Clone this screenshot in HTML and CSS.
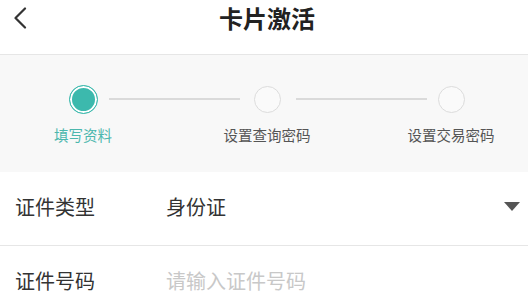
FILE: index.html
```html
<!DOCTYPE html>
<html lang="zh-CN">
<head>
  <meta charset="UTF-8"/>
  <meta name="viewport" content="width=device-width, initial-scale=1.0"/>
  <title>卡片激活</title>
  <link rel="stylesheet" href="styles.css">
</head>
<body>
  <div class="header">
    <a class="back" href="#">
      <svg width="14" height="22" viewBox="0 0 14 22"><polyline points="12,1.5 2.5,11 12,20.5" fill="none" stroke="#333" stroke-width="2.2" stroke-linecap="round" stroke-linejoin="round"/></svg>
    </a>
    <h1>卡片激活</h1>
  </div>

  <!-- steps -->
  <div class="steps">
    <div class="step active">
      <div class="dot-wrap"><span class="dot"></span></div>
      <span class="step-label">填写资料</span>
    </div>
    <div class="line"></div>
    <div class="step">
      <div class="dot-wrap"><span class="dot"></span></div>
      <span class="step-label">设置查询密码</span>
    </div>
    <div class="line"></div>
    <div class="step">
      <div class="dot-wrap"><span class="dot"></span></div>
      <span class="step-label">设置交易密码</span>
    </div>
  </div>

  <form class="form">
    <div class="row">
      <label>证件类型</label>
      <span class="value">身份证</span>
      <span class="caret"></span>
    </div>
    <div class="row">
      <label>证件号码</label>
      <input type="text" placeholder="请输入证件号码">
    </div>
  </form>
</body>
</html>
```

FILE: styles.css
```css
body { margin:0; background:#fff; font-family:"Noto Sans CJK SC", "Noto Sans", sans-serif; color:#333; overflow:hidden; }
.header {
  position: relative;
  height: 54px;
  border-bottom: 1px solid #e6e6e6;
  display: flex;
  align-items: center;
  justify-content: center;
}
.header h1 { margin:0; font-size:24px; font-weight:bold; color:#222; line-height:1; margin-top:-18px; margin-left:6px; }
.back { position:absolute; left:13px; top:7px; display:block; width:14px; height:22px; }
.back svg { display:block; }

.steps {
  background: #f8f8f8;
  display: flex;
  align-items: flex-start;
  padding: 29px 61px 27px 67px;
}
.step { width:32px; display:flex; flex-direction:column; align-items:center; }
.dot-wrap { height:31px; display:flex; align-items:center; justify-content:center; }
.dot {
  display: block;
  width: 25px;
  height: 25px;
  border: 1px solid #dcdcdc;
  border-radius: 50%;
  background: #fafafa;
}
.step.active .dot {
  width: 27px;
  height: 27px;
  border: 1.5px solid #3cb9ad;
  background: #3cb9ad;
  box-shadow: inset 0 0 0 2px #fff;
}
.step-label { margin-top:10px; font-size:14.5px; line-height:20px; color:#555; white-space:nowrap; }
.step.active .step-label { color:#4cb7ad; }
.line { flex:1; height:2px; background:#dadada; margin:14px 11px 0 10px; }
.line + .step + .line { margin:14px 8px 0 13px; }

.form { margin:0; }
.row {
  height: 69px;
  display: flex;
  align-items: center;
  padding: 0 8px 4px 15px;
  border-bottom: 1px solid #e6e6e6;
  font-size: 20px;
}
.row label { width:151px; flex-shrink:0; color:#333; }
.row .value { flex:1; color:#333; }
.row input {
  flex: 1;
  border: none;
  outline: none;
  padding: 0;
  font: inherit;
  color: #333;
  background: transparent;
}
.row input::placeholder { color:#c8c8c8; }
.caret {
  width: 0;
  height: 0;
  border-left: 8px solid transparent;
  border-right: 8px solid transparent;
  border-top: 9px solid #555;
}
```
